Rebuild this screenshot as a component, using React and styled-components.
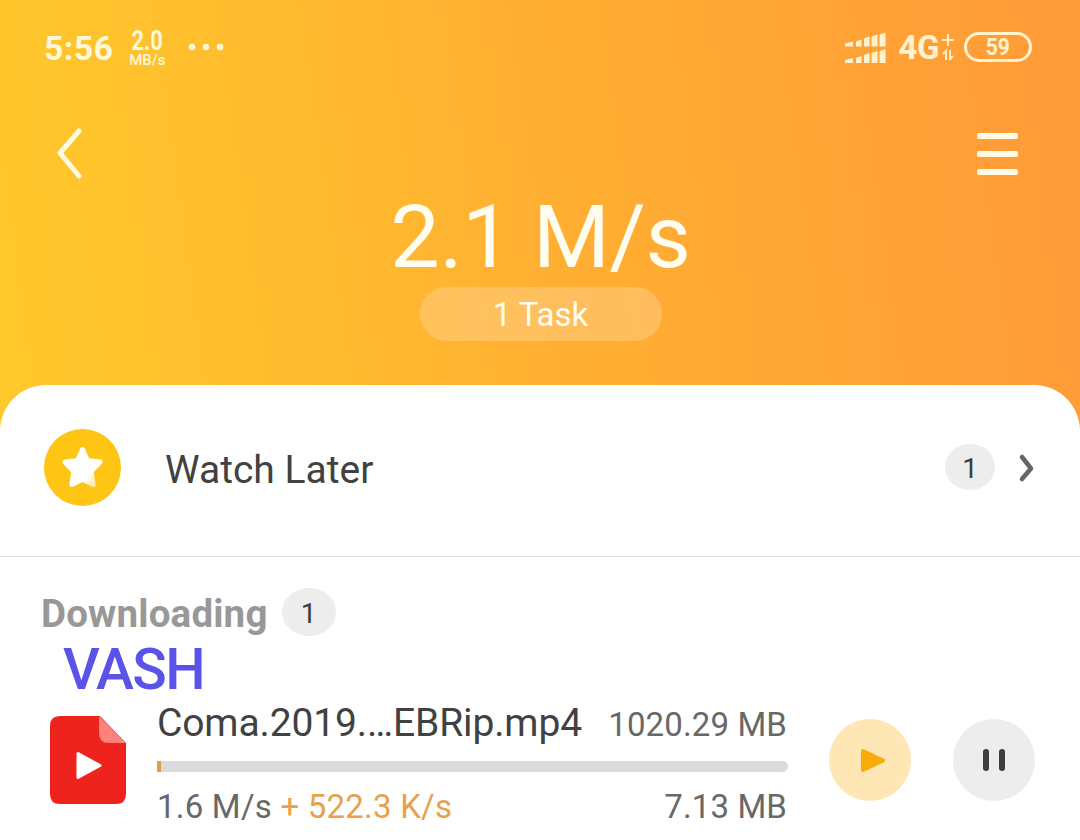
import React from "react";
import styled, { createGlobalStyle } from "styled-components";

const GlobalStyle = createGlobalStyle`
  *, *::before, *::after { box-sizing: border-box; }
  body { margin: 0; background: #fff; font-family: Roboto, "Noto Sans", sans-serif; }
  svg { display: block; flex: none; }
`;

const Screen = styled.main`
  display: flex;
  flex-direction: column;
  width: 1080px;
  height: 840px;
  overflow: hidden;
  background: linear-gradient(82deg, #ffc92b 0%, #ffc12d 18%, #ffae33 54%, #ffa037 86%, #ff9b3a 100%) top / 100% 450px no-repeat, #fff;
`;

const Text = styled.span`
  font-size: ${(p) => p.$size}px;
  font-weight: ${(p) => p.$weight || 400};
  line-height: ${(p) => p.$line || p.$size}px;
  letter-spacing: ${(p) => p.$track || 0}px;
  color: ${(p) => p.$color || "#fffdf0"};
  white-space: nowrap;
`;

const StatusBar = styled.div`
  display: flex;
  align-items: center;
  justify-content: space-between;
  height: 96px;
  padding: 0 48px 0 44px;
`;

const StatusGroup = styled.div`
  display: flex;
  align-items: center;
`;

const NetSpeed = styled.div`
  display: flex;
  flex-direction: column;
  align-items: center;
  width: 38px;
  margin: 0 22px 0 15px;
`;

const NarrowText = styled(Text)`
  transform: scaleX(${(p) => p.$scale});
`;

const Network = styled.div`
  display: flex;
  align-items: center;
  gap: 1px;
  margin-left: 12px;
`;

const Battery = styled.div`
  display: flex;
  align-items: center;
  justify-content: center;
  width: 68px;
  height: 30px;
  margin: 0 0 2px 9px;
  border: 3px solid #fff3cf;
  border-radius: 15px;
`;

const Header = styled.header`
  display: flex;
  align-items: flex-start;
  justify-content: space-between;
  height: 289px;
  padding: 32px 62px 0 56px;
`;

const IconButton = styled.button`
  padding: 0;
  border: 0;
  background: none;
`;

const Summary = styled.div`
  display: flex;
  flex-direction: column;
  align-items: center;
  padding: 61px 0 0 20px;
`;

const TaskPill = styled.div`
  display: flex;
  align-items: center;
  justify-content: center;
  width: 242px;
  height: 54px;
  margin-top: 3px;
  border-radius: 27px;
  background: rgba(255, 214, 160, 0.4);
`;

const Sheet = styled.section`
  flex: 1;
  border-radius: 46px 46px 0 0;
  background: #fff;
`;

const WatchLater = styled.div`
  display: flex;
  align-items: center;
  height: 172px;
  padding: 0 44px 6px;
  border-bottom: 1px solid #dedede;
`;

const WatchTitle = styled(Text)`
  flex: 1;
  padding: 6px 0 0 44px;
`;

const CountBadge = styled.span`
  display: flex;
  align-items: center;
  justify-content: center;
  width: ${(p) => p.$w}px;
  height: ${(p) => p.$h}px;
  padding-top: 4px;
  margin-bottom: 2px;
  border-radius: 50%;
  background: #ededed;
  color: #3d3d3d;
  font-size: 28px;
  line-height: 28px;
`;

const SectionHeading = styled.div`
  display: flex;
  align-items: center;
  gap: 14px;
  height: 84px;
  padding: 28px 0 0 41px;
`;

const SectionTitle = styled(Text)`
  padding-top: 2px;
`;

const Owner = styled.div`
  display: flex;
  height: 60px;
  padding-left: 63px;
`;

const DownloadRow = styled.article`
  display: flex;
  align-items: flex-start;
  padding: 0 45px 0 49px;
`;

const FileIcon = styled.svg`
  margin-top: 14px;
`;

const Details = styled.div`
  width: 631px;
  margin-left: 30px;
`;

const DetailLine = styled.div`
  display: flex;
  align-items: baseline;
  justify-content: space-between;
  height: 42px;
  padding: ${(p) => p.$top}px 1px 0 0;
`;

const Track = styled.div`
  height: 11px;
  margin: 18px 0 16px;
  overflow: hidden;
  border-radius: 0 6px 6px 0;
  background: #dbdbdb;
`;

const Progress = styled.div`
  width: 3.5px;
  height: 100%;
  background: #e99b43;
`;

const RoundButton = styled.button`
  display: flex;
  align-items: center;
  justify-content: center;
  width: 82px;
  height: 82px;
  padding: 0;
  margin: 18px 0 0 ${(p) => p.$left}px;
  border: 0;
  border-radius: 50%;
  background: ${(p) => p.$bg};
`;

const signalBars = [
  { x: 0, w: 8, h: 5 },
  { x: 11, w: 5.5, h: 7 },
  { x: 19, w: 5.5, h: 10 },
  { x: 26.5, w: 6, h: 12 },
  { x: 34.5, w: 6, h: 14 },
];

export default function App() {
  return (
    <>
      <GlobalStyle />
      <Screen>
        <StatusBar>
          <StatusGroup>
            <Text $size={34} $weight={700} $line={40} $track={0.3} $color="#fff8da">5:56</Text>
            <NetSpeed>
              <NarrowText $size={28} $weight={700} $line={25} $scale={0.78} $color="#fff8da">2.0</NarrowText>
              <Text $size={15} $weight={500} $line={15} $color="#fff8da">MB/s</Text>
            </NetSpeed>
            <svg width="36" height="10" fill="#fff8da">
              <circle cx="4" cy="4" r="3.3" /><circle cx="18" cy="4" r="3.3" /><circle cx="32" cy="4" r="3.3" />
            </svg>
          </StatusGroup>
          <StatusGroup>
            <svg width="42" height="32" fill="#fff3cf">
              {[14.5, 31].map((base) => signalBars.map((bar) => (
                <path key={`${base}-${bar.x}`} d={`M${bar.x} ${base}v${-(bar.h - 2)}l${bar.w} -2v${bar.h}z`} />
              )))}
            </svg>
            <Network>
              <Text $size={33} $weight={700} $line={36} $track={-0.5} $color="#fff3cf">4G</Text>
              <svg width="15" height="28" viewBox="0 0 15 28" fill="none" stroke="#fff0c4" strokeWidth="2">
                <path d="M8 0v12M2 6h12M6 26V17l-3 3M10 16v9l3-3" />
              </svg>
            </Network>
            <Battery>
              <NarrowText $size={24} $weight={700} $scale={0.88} $color="#fff3cf">59</NarrowText>
            </Battery>
          </StatusGroup>
        </StatusBar>

        <Header>
          <IconButton aria-label="Back">
            <svg width="28" height="52" fill="none" stroke="#fffbe2" strokeWidth="5" strokeLinecap="round" strokeLinejoin="round">
              <path d="M23 3L4 25l19 23" />
            </svg>
          </IconButton>
          <Summary>
            <Text $size={88} $line={95} $track={-0.3}>2.1 M/s</Text>
            <TaskPill><Text $size={33} $line={35}>1 Task</Text></TaskPill>
          </Summary>
          <IconButton aria-label="Menu">
            <svg width="41" height="50" fill="#fffbe2">
              <rect y="5" width="41" height="6" rx="2" />
              <rect y="23" width="41" height="6" rx="2" />
              <rect y="41" width="41" height="6" rx="2" />
            </svg>
          </IconButton>
        </Header>

        <Sheet>
          <WatchLater>
            <svg width="77" height="77" viewBox="0 0 77 77">
              <defs>
                <linearGradient id="star" x1="0.25" y1="0.3" x2="1" y2="1">
                  <stop offset="0.58" stopColor="#fff" /><stop offset="0.9" stopColor="#ffe7a0" />
                </linearGradient>
              </defs>
              <circle cx="38.5" cy="38.5" r="38.5" fill="#fec514" />
              <path d="M38.5 20.5L43.4 31.5L56 33L47 42.5L49.2 55.5L38.5 50.3L27.8 55.5L30 42.5L21 33L33.6 31.5Z" fill="url(#star)" stroke="url(#star)" strokeWidth="5" strokeLinejoin="round" />
            </svg>
            <WatchTitle $size={39} $color="#414141">Watch Later</WatchTitle>
            <CountBadge $w={50} $h={46}>1</CountBadge>
            <svg width="41" height="32" fill="none" stroke="#666" strokeWidth="4.5" strokeLinecap="round" strokeLinejoin="round">
              <path d="M27 5l9 11.5L27 27" />
            </svg>
          </WatchLater>

          <SectionHeading>
            <SectionTitle $size={38.5} $weight={700} $track={0.18} $color="#989898">Downloading</SectionTitle>
            <CountBadge $w={54} $h={48}>1</CountBadge>
          </SectionHeading>
          <Owner><Text $size={57} $weight={500} $line={58} $track={-1.6} $color="#5b53e8">VASH</Text></Owner>

          <DownloadRow>
            <FileIcon width="78" height="90" viewBox="0 0 78 90">
              <path d="M10 1H51L77 28V79Q77 89 67 89H11Q1 89 1 79V11Q1 1 11 1Z" fill="#ef231d" />
              <path d="M50 1L77 28H60Q50 28 50 18Z" fill="#ff817b" />
              <path d="M29 38.5L51 50.5L29 62.5Z" fill="#fff" stroke="#fff" strokeWidth="3" strokeLinejoin="round" />
            </FileIcon>
            <Details>
              <DetailLine $top={3}>
                <Text $size={39} $track={-0.13} $color="#414141">Coma.2019.…EBRip.mp4</Text>
                <Text $size={33} $track={0.12} $color="#686868">1020.29 MB</Text>
              </DetailLine>
              <Track><Progress /></Track>
              <DetailLine $top={2}>
                <Text $size={33} $track={0.22} $color="#686868">1.6 M/s <Text $size={33} $track={0.22} $color="#e9a04c">+ 522.3 K/s</Text></Text>
                <Text $size={33} $track={0.12} $color="#686868">7.13 MB</Text>
              </DetailLine>
            </Details>
            <RoundButton aria-label="Play" $left={41} $bg="#ffe7b5">
              <svg width="30" height="30" fill="#f9ab0c" stroke="#f9ab0c" strokeWidth="4" strokeLinejoin="round">
                <path d="M8 6L28 15.5L8 25Z" />
              </svg>
            </RoundButton>
            <RoundButton aria-label="Pause" $left={42} $bg="#ededed">
              <svg width="24" height="24" fill="#3e3e3e">
                <rect x="1" y="1" width="6" height="22" rx="3" />
                <rect x="17" y="1" width="6" height="22" rx="3" />
              </svg>
            </RoundButton>
          </DownloadRow>
        </Sheet>
      </Screen>
    </>
  );
}
